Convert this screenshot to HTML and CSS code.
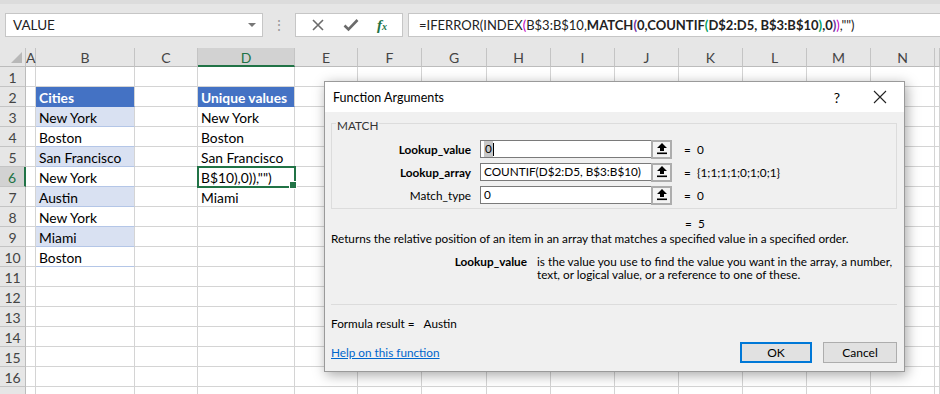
FILE: index.html
```html
<!DOCTYPE html>
<html>
<head>
    <title>Function Arguments</title>
    <meta name="viewport" content="width=device-width, initial-scale=1.0">
    <link rel="stylesheet" href="styles.css">
</head>
<body>
    <div class="formula-bar">
        <div class="name-box">
            <span>VALUE</span>
            <span class="caret"></span>
        </div>
        <div class="grip">&#8942;</div>
        <div class="fx-buttons">
            <svg width="14" height="14" viewBox="0 0 14 14"><path d="M2 2 L12 12 M12 2 L2 12" stroke="#6b6b6b" stroke-width="1.6" fill="none"/></svg>
            <svg width="16" height="14" viewBox="0 0 16 14"><path d="M1.5 7.5 L5.5 11.5 L14.5 2" stroke="#6b6b6b" stroke-width="2.6" fill="none"/></svg>
            <span class="fx">f<sub>x</sub></span>
        </div>
        <div class="formula-input">=IFERROR(INDEX<span class="p1">(</span>B$3:B$10,<b>MATCH<span class="p2">(</span>0,COUNTIF<span class="p3">(</span>D$2:D5, B$3:B$10<span class="p3">)</span>,0<span class="p2">)</span></b><span class="p1">)</span>,"")</div>
    </div>

    <div class="sheet">
        <div class="ch corner"></div><div class="ch">A</div><div class="ch">B</div><div class="ch">C</div><div class="ch active-col">D</div><div class="ch">E</div><div class="ch">F</div><div class="ch">G</div><div class="ch">H</div><div class="ch">I</div><div class="ch">J</div><div class="ch">K</div><div class="ch">L</div><div class="ch">M</div><div class="ch">N</div><div class="ch"></div>

        <div class="rh">1</div><div></div><div></div><div></div><div></div><div></div><div></div><div></div><div></div><div></div><div></div><div></div><div></div><div></div><div></div><div></div>
        <div class="rh">2</div><div></div><div class="t-head">Cities</div><div></div><div class="t-head">Unique values</div><div></div><div></div><div></div><div></div><div></div><div></div><div></div><div></div><div></div><div></div><div></div>
        <div class="rh">3</div><div></div><div class="t-band">New York</div><div></div><div>New York</div><div></div><div></div><div></div><div></div><div></div><div></div><div></div><div></div><div></div><div></div><div></div>
        <div class="rh">4</div><div></div><div class="t-row">Boston</div><div></div><div>Boston</div><div></div><div></div><div></div><div></div><div></div><div></div><div></div><div></div><div></div><div></div><div></div>
        <div class="rh">5</div><div></div><div class="t-band">San Francisco</div><div></div><div>San Francisco</div><div></div><div></div><div></div><div></div><div></div><div></div><div></div><div></div><div></div><div></div><div></div>
        <div class="rh active-row">6</div><div></div><div class="t-row">New York</div><div></div><div class="selected">B$10),0)),"")</div><div></div><div></div><div></div><div></div><div></div><div></div><div></div><div></div><div></div><div></div><div></div>
        <div class="rh">7</div><div></div><div class="t-band">Austin</div><div></div><div>Miami</div><div></div><div></div><div></div><div></div><div></div><div></div><div></div><div></div><div></div><div></div><div></div>
        <div class="rh">8</div><div></div><div class="t-row">New York</div><div></div><div></div><div></div><div></div><div></div><div></div><div></div><div></div><div></div><div></div><div></div><div></div><div></div>
        <div class="rh">9</div><div></div><div class="t-band">Miami</div><div></div><div></div><div></div><div></div><div></div><div></div><div></div><div></div><div></div><div></div><div></div><div></div><div></div>
        <div class="rh">10</div><div></div><div class="t-row">Boston</div><div></div><div></div><div></div><div></div><div></div><div></div><div></div><div></div><div></div><div></div><div></div><div></div><div></div>
        <div class="rh">11</div><div></div><div></div><div></div><div></div><div></div><div></div><div></div><div></div><div></div><div></div><div></div><div></div><div></div><div></div><div></div>
        <div class="rh">12</div><div></div><div></div><div></div><div></div><div></div><div></div><div></div><div></div><div></div><div></div><div></div><div></div><div></div><div></div><div></div>
        <div class="rh">13</div><div></div><div></div><div></div><div></div><div></div><div></div><div></div><div></div><div></div><div></div><div></div><div></div><div></div><div></div><div></div>
        <div class="rh">14</div><div></div><div></div><div></div><div></div><div></div><div></div><div></div><div></div><div></div><div></div><div></div><div></div><div></div><div></div><div></div>
        <div class="rh">15</div><div></div><div></div><div></div><div></div><div></div><div></div><div></div><div></div><div></div><div></div><div></div><div></div><div></div><div></div><div></div>
        <div class="rh">16</div><div></div><div></div><div></div><div></div><div></div><div></div><div></div><div></div><div></div><div></div><div></div><div></div><div></div><div></div><div></div>
        <div class="rh"></div><div></div><div></div><div></div><div></div><div></div><div></div><div></div><div></div><div></div><div></div><div></div><div></div><div></div><div></div><div></div>
    </div>

    <div class="dialog">
        <div class="dialog-title">
            <span class="title-text">Function Arguments</span>
            <span class="title-help">?</span>
            <svg class="title-close" width="14" height="14" viewBox="0 0 14 14"><path d="M1 1 L13 13 M13 1 L1 13" stroke="#222" stroke-width="1.1" fill="none"/></svg>
        </div>
        <div class="dialog-body">
            <div class="group">
                <span class="group-title">MATCH</span>
                <div class="args">
                    <label class="arg-label">Lookup_value</label>
                    <div class="arg-input"><span class="arg-selected">0</span><span class="arg-cursor"></span></div>
                    <div class="ref-btn"><svg width="10" height="12" viewBox="0 0 10 12"><path d="M5 0 L10 5 H7 V8 H3 V5 H0 Z" fill="#000"/><rect x="0" y="9.5" width="10" height="1.6" fill="#000"/></svg></div>
                    <div class="arg-value"><span class="eq">=</span>0</div>

                    <label class="arg-label">Lookup_array</label>
                    <div class="arg-input">COUNTIF(D$2:D5, B$3:B$10)</div>
                    <div class="ref-btn"><svg width="10" height="12" viewBox="0 0 10 12"><path d="M5 0 L10 5 H7 V8 H3 V5 H0 Z" fill="#000"/><rect x="0" y="9.5" width="10" height="1.6" fill="#000"/></svg></div>
                    <div class="arg-value"><span class="eq">=</span>{1;1;1;1;0;1;0;1}</div>

                    <label class="arg-label normal">Match_type</label>
                    <div class="arg-input">0</div>
                    <div class="ref-btn"><svg width="10" height="12" viewBox="0 0 10 12"><path d="M5 0 L10 5 H7 V8 H3 V5 H0 Z" fill="#000"/><rect x="0" y="9.5" width="10" height="1.6" fill="#000"/></svg></div>
                    <div class="arg-value"><span class="eq">=</span>0</div>
                </div>
            </div>

            <div class="result-line"><span class="eq">=</span>5</div>
            <p class="description">Returns the relative position of an item in an array that matches a specified value in a specified order.</p>

            <div class="arg-help">
                <span class="arg-help-name">Lookup_value</span>
                <span class="arg-help-text">is the value you use to find the value you want in the array, a number, text, or logical value, or a reference to one of these.</span>
            </div>

            <div class="separator"></div>

            <div class="formula-result">Formula result =<span class="result-value">Austin</span></div>

            <div class="dialog-footer">
                <a class="help-link" href="#">Help on this function</a>
                <button class="btn btn-default">OK</button>
                <button class="btn">Cancel</button>
            </div>
        </div>
    </div>
</body>
</html>
```

FILE: styles.css
```css
* {
    margin: 0;
    padding: 0;
    box-sizing: border-box;
}

html, body {
    width: 100%;
    height: 100%;
    overflow: hidden;
}

body {
    background: #ffffff;
    font-family: Lato, "Liberation Sans", sans-serif;
    color: #000;
    position: relative;
}

/* formula bar */
.formula-bar {
    height: 48px;
    background: #e6e6e6;
    display: flex;
    align-items: flex-start;
    border-top: 4px solid #dcdcdc;
    padding-top: 9px;
}

.name-box {
    margin-left: 5px;
    width: 258px;
    height: 24px;
    background: #fff;
    border: 1px solid #c6c6c6;
    display: flex;
    align-items: center;
    justify-content: space-between;
    padding: 0 6px 0 7px;
    font-size: 13.5px;
    color: #222;
}

.caret {
    width: 0;
    height: 0;
    border-left: 4px solid transparent;
    border-right: 4px solid transparent;
    border-top: 4px solid #777;
}

.grip {
    width: 32px;
    text-align: center;
    color: #999;
    font-size: 14px;
    line-height: 24px;
}

.fx-buttons {
    width: 108px;
    height: 24px;
    background: #fff;
    border: 1px solid #c6c6c6;
    display: flex;
    align-items: center;
    justify-content: space-around;
    padding: 0 6px;
}

.fx {
    font-family: "Liberation Serif", serif;
    font-style: italic;
    font-weight: bold;
    color: #217346;
    font-size: 15px;
}

.fx sub {
    font-size: 10px;
    vertical-align: 0;
}

.formula-input {
    margin-left: 5px;
    flex: 1;
    height: 24px;
    background: #fff;
    border: 1px solid #c6c6c6;
    border-right: none;
    padding-left: 10px;
    font-size: 13px;
    line-height: 22px;
    color: #222;
    white-space: nowrap;
}

.formula-input b {
    font-weight: bold;
}

.p1 { color: #c000c0; }
.p2 { color: #7030a0; }
.p3 { color: #00a060; }

/* sheet grid */
.sheet {
    display: grid;
    grid-template-columns: 26px 10px 99px 63px 97px 63px 64px 65px 64px 64px 64px 64px 64px 64px 64px 1fr;
    grid-template-rows: 19px;
    grid-auto-rows: 20px;
    font-size: 13.8px;
}

.sheet > div {
    border-right: 1px solid #d4d4d4;
    border-bottom: 1px solid #d4d4d4;
    padding-left: 3px;
    line-height: 21px;
    white-space: nowrap;
    color: #000;
}

.sheet > .ch {
    background: #e6e6e6;
    border-right-color: #c4c4c4;
    border-bottom-color: #bcbcbc;
    text-align: center;
    padding-left: 0;
    font-size: 14px;
    line-height: 19px;
    color: #444;
}

.sheet > .corner {
    position: relative;
}

.corner::after {
    content: "";
    position: absolute;
    right: 3px;
    bottom: 3px;
    border-left: 11px solid transparent;
    border-bottom: 11px solid #b8b8b8;
}

.sheet > .active-col {
    background: #d2d2d2;
    border-bottom: 2px solid #217346;
    color: #217346;
}

.sheet > .rh {
    background: #e6e6e6;
    border-right-color: #bcbcbc;
    border-bottom-color: #c4c4c4;
    text-align: center;
    padding-left: 0;
    font-size: 14px;
    color: #444;
}

.sheet > .active-row {
    background: #d2d2d2;
    border-right: 2px solid #217346;
    color: #217346;
}

.sheet > .t-head {
    background: #4472c4;
    color: #fff;
    font-weight: bold;
    border-bottom-color: #4472c4;
}

.sheet > .t-band {
    background: #d9e1f2;
    border-bottom-color: #b4c6e7;
}

.sheet > .t-row {
    border-bottom-color: #b4c6e7;
}

.sheet > .selected {
    position: relative;
    outline: 2px solid #217346;
    outline-offset: -1px;
}

.selected::after {
    content: "";
    position: absolute;
    right: -3px;
    bottom: -3px;
    width: 6px;
    height: 6px;
    background: #217346;
    border: 1px solid #fff;
}

/* dialog */
.dialog {
    position: absolute;
    left: 324px;
    top: 81px;
    width: 581px;
    height: 291px;
    background: #f0f0f0;
    border: 1px solid #9a9a9a;
    box-shadow: 2px 3px 12px rgba(0, 0, 0, 0.35);
    font-family: Lato, "Liberation Sans", sans-serif;
    font-size: 11.75px;
    color: #000;
}

.dialog-title {
    height: 30px;
    background: #fff;
    display: flex;
    align-items: center;
    padding-left: 8px;
}

.title-text {
    flex: 1;
    font-size: 12.5px;
}

.title-help {
    font-size: 14px;
    margin-right: 33px;
}

.title-close {
    margin-right: 17px;
}

.dialog-body {
    padding: 11px 7px 0 6px;
}

.group {
    position: relative;
    border: 1px solid #dcdcdc;
    padding: 16px 0 4px;
}

.group-title {
    position: absolute;
    left: 4px;
    top: -6px;
    background: #f0f0f0;
    padding: 0 1px;
    color: #333;
}

.args {
    display: grid;
    grid-template-columns: 139px 171px 21px 1fr;
    grid-auto-rows: 18px;
    row-gap: 5px;
    align-items: center;
}

.arg-label {
    font-weight: bold;
    text-align: right;
}

.arg-label.normal {
    font-weight: normal;
}

.arg-input {
    height: 18px;
    background: #fff;
    border: 1px solid #7a7a7a;
    border-right: none;
    padding-left: 3px;
    line-height: 16px;
    display: flex;
    align-items: center;
    margin-left: 9px;
    margin-right: -9px;
}

.arg-selected {
    background: #c8c8c8;
    padding: 0 1px;
}

.arg-cursor {
    width: 1px;
    height: 13px;
    background: #000;
}

.ref-btn {
    height: 19px;
    width: 21px;
    margin-left: 9px;
    margin-right: -9px;
    border: 2px solid #adadad;
    background: #f4f4f4;
    display: flex;
    align-items: center;
    justify-content: center;
}

.arg-value {
    padding-left: 21px;
    white-space: nowrap;
}

.eq {
    display: inline-block;
    width: 13px;
}

.result-line {
    padding-left: 354px;
    margin-top: 7px;
    line-height: 15px;
}

.description {
    line-height: 15px;
}

.arg-help {
    display: grid;
    grid-template-columns: 196px 1fr;
    column-gap: 10px;
    margin-top: 9px;
    line-height: 13px;
}

.arg-help-name {
    font-weight: bold;
    text-align: right;
}

.separator {
    border-top: 1px solid #dcdcdc;
    margin-top: 23px;
}

.formula-result {
    margin-top: 12px;
    line-height: 14px;
}

.result-value {
    margin-left: 9px;
}

.dialog-footer {
    display: flex;
    align-items: center;
    margin-top: 11px;
}

.help-link {
    flex: 1;
    color: #0066cc;
    text-decoration: underline;
}

.btn {
    width: 74px;
    height: 21px;
    background: #e1e1e1;
    border: 1px solid #adadad;
    font-family: inherit;
    font-size: 12px;
    margin-left: 11px;
}

.btn-default {
    width: 72px;
    border: 2px solid #0078d7;
}
```
